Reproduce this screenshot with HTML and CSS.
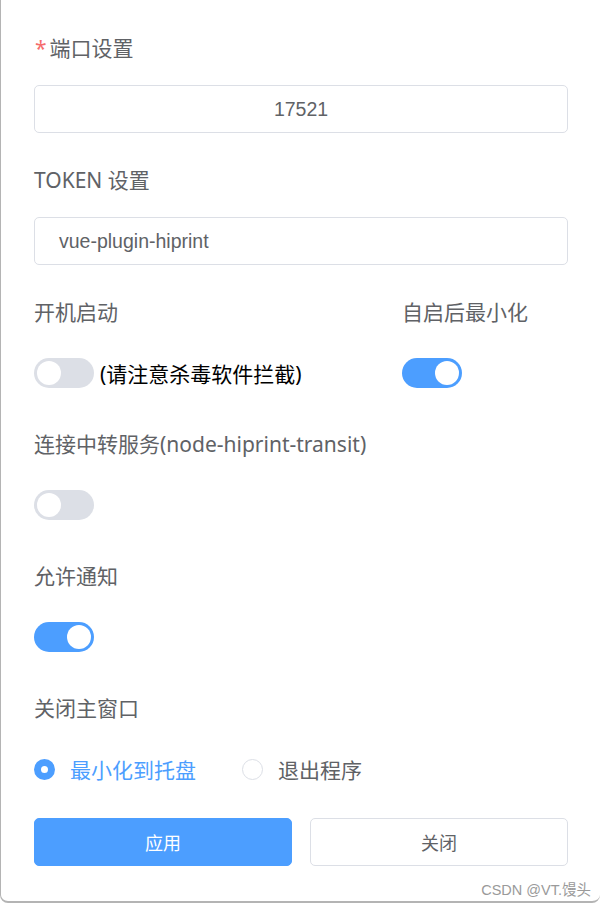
FILE: index.html
```html
<!DOCTYPE html>
<html lang="zh-CN">
<head>
    <meta charset="UTF-8">
    <meta name="viewport" content="width=device-width, initial-scale=1.0">
    <title>设置</title>
    <link rel="stylesheet" href="styles.css">
</head>
<body>

    <div id="settings">
        <div class="form-item">
            <div class="label"><span class="required">*</span>端口设置</div>
            <div class="input center">17521</div>
        </div>

        <div class="form-item">
            <div class="label">TOKEN 设置</div>
            <div class="input">vue-plugin-hiprint</div>
        </div>

        <div class="form-row">
            <div class="form-item">
                <div class="label">开机启动</div>
                <div class="control">
                    <span class="switch"></span>
                    <span class="hint">(请注意杀毒软件拦截)</span>
                </div>
            </div>
            <div class="form-item">
                <div class="label">自启后最小化</div>
                <div class="control">
                    <span class="switch on"></span>
                </div>
            </div>
        </div>

        <div class="form-item">
            <div class="label">连接中转服务(node-hiprint-transit)</div>
            <div class="control">
                <span class="switch"></span>
            </div>
        </div>

        <div class="form-item">
            <div class="label">允许通知</div>
            <div class="control">
                <span class="switch on"></span>
            </div>
        </div>

        <div class="form-item last">
            <div class="label">关闭主窗口</div>
            <div class="control">
                <label class="radio checked"><span class="dot"></span>最小化到托盘</label>
                <label class="radio"><span class="dot"></span>退出程序</label>
            </div>
        </div>

        <div id="buttons">
            <button class="btn primary">应用</button>
            <button class="btn">关闭</button>
        </div>

        <div class="watermark">CSDN @VT.馒头</div>
    </div>

</body>
</html>
```

FILE: styles.css
```css
body {
    margin: 0;
    padding: 0;
    font-family: "Noto Sans", "Noto Sans CJK SC", sans-serif;
    background: #fff;
}

#settings {
    box-sizing: border-box;
    height: 903px;
    padding: 36px 32px 0 33px;
    border-left: 1px solid #b4b4b4;
    border-bottom: 2px solid #b4b4b4;
    border-bottom-right-radius: 8px;
    border-bottom-left-radius: 8px;
    color: #606266;
}

.form-item {
    margin-bottom: 35px;
}
.form-item.last {
    margin-bottom: 25px;
}

.label {
    font-size: 21px;
    line-height: 24px;
    height: 24px;
    margin-bottom: 25px;
    white-space: nowrap;
}
.required {
    color: #f56c6c;
    margin-right: 3px;
    margin-left: 1px;
}

.input {
    box-sizing: border-box;
    height: 48px;
    line-height: 46px;
    border: 1px solid #dcdfe6;
    border-radius: 5px;
    padding: 0 24px;
    font-family: "Liberation Sans", "Noto Sans CJK SC", sans-serif;
    font-size: 19.5px;
    color: #606266;
}
.input.center {
    text-align: center;
}

.form-row {
    display: grid;
    grid-template-columns: 368px auto;
}

.control {
    height: 48px;
    display: flex;
    align-items: center;
}

.switch {
    position: relative;
    display: inline-block;
    width: 60px;
    height: 30px;
    border-radius: 15px;
    background-color: #dcdfe6;
}
.switch::after {
    content: "";
    position: absolute;
    top: 3px;
    left: 3px;
    width: 24px;
    height: 24px;
    border-radius: 50%;
    background: #fff;
}
.switch.on {
    background-color: #4c9eff;
}
.switch.on::after {
    left: 33px;
}

.hint {
    margin-left: 6px;
    font-size: 21px;
    color: #000;
    white-space: nowrap;
}

.radio {
    display: flex;
    align-items: center;
    font-size: 21px;
    color: #606266;
    margin-right: 46px;
}
.radio .dot {
    box-sizing: border-box;
    width: 21px;
    height: 21px;
    border-radius: 50%;
    border: 1px solid #dcdfe6;
    margin-right: 15px;
    background: #fff;
}
.radio.checked {
    color: #4c9eff;
}
.radio.checked .dot {
    border: 7px solid #4c9eff;
}

#buttons {
    display: flex;
    gap: 18px;
}
.btn {
    flex: 1;
    height: 48px;
    border-radius: 5px;
    border: 1px solid #dcdfe6;
    background: #fff;
    color: #606266;
    font-family: "Noto Sans", "Noto Sans CJK SC", sans-serif;
    font-size: 18px;
    cursor: pointer;
}
.btn.primary {
    background-color: #4c9eff;
    border-color: #4c9eff;
    color: #fff;
}

.watermark {
    text-align: right;
    margin-top: 12px;
    margin-right: -23px;
    font-family: "Liberation Sans", "Noto Sans CJK SC", sans-serif;
    font-size: 14.5px;
    color: #9a9a9a;
}
```
